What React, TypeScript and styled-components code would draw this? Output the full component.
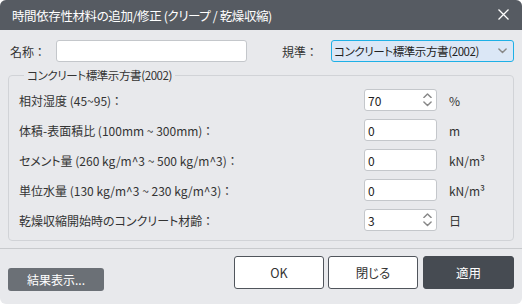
import React from 'react';
import styled, { createGlobalStyle } from 'styled-components';

const GlobalStyle = createGlobalStyle`
  html, body {
    margin: 0;
    padding: 0;
    background: #ffffff;
  }
  * {
    box-sizing: border-box;
  }
`;

const FONT = `"Noto Sans CJK JP", "Noto Sans", sans-serif`;

const Window = styled.div`
  width: 522px;
  height: 304px;
  border-radius: 6px;
  overflow: hidden;
  background: #e8e9ec;
  display: flex;
  flex-direction: column;
  font-family: ${FONT};
  font-feature-settings: 'palt';
  color: #333;
`;

const TitleBar = styled.div`
  height: 30px;
  flex: none;
  background: #565b62;
  color: #fff;
  display: flex;
  align-items: center;
  justify-content: space-between;
  padding: 0 12px 0 12px;
  font-size: 12.5px;
  letter-spacing: -0.4px;
`;

const CloseBtn = styled.div`
  width: 12px;
  height: 12px;
  display: flex;
`;

const Body = styled.div`
  flex: 1;
  padding: 10px 8px 0 8px;
  display: flex;
  flex-direction: column;
`;

const TopRow = styled.div`
  display: flex;
  align-items: center;
  height: 22px;
`;

const Label = styled.span<{ $w?: number }>`
  font-size: 12px;
  white-space: nowrap;
  ${(p) => (p.$w ? `width: ${p.$w}px;` : '')}
`;

const TextBox = styled.div<{ $w: number }>`
  width: ${(p) => p.$w}px;
  height: 22px;
  background: #fff;
  border: 1px solid #c4c7cb;
  border-radius: 3px;
  display: flex;
  align-items: center;
  padding: 0 3px;
  font-size: 12px;
  color: #222;
  position: relative;
`;

const Select = styled.div`
  width: 183px;
  height: 22px;
  margin-left: auto;
  background: #dbe7f6;
  border: 1px solid #1eb0e6;
  border-radius: 3px;
  display: flex;
  align-items: center;
  justify-content: space-between;
  padding: 0 6px 0 2px;
  font-size: 11.5px;
  letter-spacing: -0.4px;
  white-space: nowrap;
  color: #222;
`;

const Group = styled.fieldset`
  margin: 5px 0 0 0;
  padding: 6px 10px 9px 10px;
  border: 1px solid #d1d3d7;
  border-radius: 4px;
  display: grid;
  grid-template-columns: 1fr 73px 66px;
  row-gap: 8px;
  align-items: center;
`;

const Legend = styled.legend`
  font-size: 11.5px;
  letter-spacing: -0.4px;
  padding: 0 3px;
  margin-left: 5px;
  color: #333;
`;

const Unit = styled.span`
  font-size: 12px;
  padding-left: 12px;
  color: #333;
`;

const Spinner = styled.div`
  position: absolute;
  right: 4px;
  top: 3px;
  display: flex;
  flex-direction: column;
  gap: 3px;
`;

const Separator = styled.div`
  height: 1px;
  background: #c8cacd;
  margin: 7px -8px 0 -8px;
`;

const Footer = styled.div`
  display: flex;
  align-items: flex-start;
  padding-top: 7px;
`;

const ResultButton = styled.div`
  width: 96px;
  height: 23px;
  margin-top: 12px;
  background: #6b7076;
  color: #fff;
  border-radius: 3px;
  display: flex;
  align-items: center;
  justify-content: center;
  font-size: 12px;
`;

const Button = styled.div<{ $primary?: boolean; $w?: number }>`
  width: ${(p) => p.$w ?? 90}px;
  height: 33px;
  margin-left: 4px;
  border-radius: 3px;
  border: 1px solid ${(p) => (p.$primary ? '#464b52' : '#50555c')};
  background: ${(p) => (p.$primary ? '#464b52' : '#ffffff')};
  color: ${(p) => (p.$primary ? '#ffffff' : '#333')};
  display: flex;
  align-items: center;
  justify-content: center;
  font-size: 12.5px;
`;

const Chevron = ({ up, size = 8 }: { up?: boolean; size?: number }) => (
  <svg width={size} height={size * 0.6} viewBox="0 0 10 6">
    <path
      d={up ? 'M1 5 L5 1 L9 5' : 'M1 1 L5 5 L9 1'}
      fill="none"
      stroke="#888"
      strokeWidth="1.6"
      strokeLinecap="round"
      strokeLinejoin="round"
    />
  </svg>
);

const SpinBox = ({ value }: { value: string }) => (
  <TextBox $w={73}>
    {value}
    <Spinner>
      <Chevron up size={9} />
      <Chevron size={9} />
    </Spinner>
  </TextBox>
);

const rows: { label: string; value: string; unit: string; spin?: boolean }[] = [
  { label: '相対湿度 (45~95) ：', value: '70', unit: '%', spin: true },
  { label: '体積-表面積比 (100mm ~ 300mm) ：', value: '0', unit: 'm' },
  { label: 'セメント量 (260 kg/m^3 ~ 500 kg/m^3) ：', value: '0', unit: 'kN/m³' },
  { label: '単位水量 (130 kg/m^3 ~ 230 kg/m^3) ：', value: '0', unit: 'kN/m³' },
  { label: '乾燥収縮開始時のコンクリート材齢 ：', value: '3', unit: '日', spin: true },
];

export default function App() {
  return (
    <>
      <GlobalStyle />
      <Window>
        <TitleBar>
          <span>時間依存性材料の追加/修正 (クリープ / 乾燥収縮)</span>
          <CloseBtn>
            <svg width="11" height="11" viewBox="0 0 11 11">
              <path d="M0.5 0.5 L10.5 10.5 M10.5 0.5 L0.5 10.5" stroke="#fff" strokeWidth="1.3" />
            </svg>
          </CloseBtn>
        </TitleBar>
        <Body>
          <TopRow>
            <Label $w={48} style={{ paddingLeft: 2 }}>名称 ：</Label>
            <TextBox $w={191} />
            <Label style={{ marginLeft: 35 }}>規準 ：</Label>
            <Select>
              <span>コンクリート標準示方書(2002)</span>
              <Chevron size={9} />
            </Select>
          </TopRow>
          <Group>
            <Legend>コンクリート標準示方書(2002)</Legend>
            {rows.map((r) => (
              <React.Fragment key={r.label}>
                <Label>{r.label}</Label>
                {r.spin ? <SpinBox value={r.value} /> : <TextBox $w={73}>{r.value}</TextBox>}
                <Unit>{r.unit}</Unit>
              </React.Fragment>
            ))}
          </Group>
          <Separator />
          <Footer>
            <ResultButton>結果表示...</ResultButton>
            <Button style={{ marginLeft: 'auto' }}>OK</Button>
            <Button>閉じる</Button>
            <Button $primary $w={91} style={{ marginLeft: 5 }}>適用</Button>
          </Footer>
        </Body>
      </Window>
    </>
  );
}
